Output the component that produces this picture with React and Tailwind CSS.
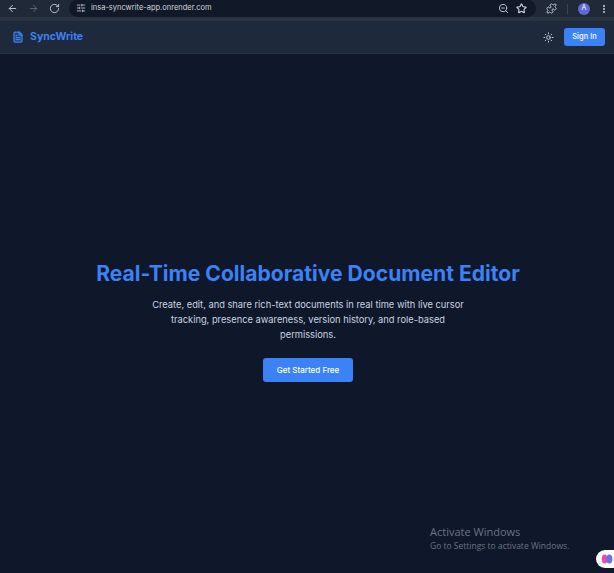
import React from 'react'
import { ArrowLeft, ArrowRight, RotateCw, SlidersHorizontal, ZoomOut, Star, Puzzle, MoreVertical, FileText, Sun } from 'lucide-react'

function BrowserBar() {
  return (
    <div className="h-[17px] flex items-center bg-[#1f2937] text-[#c7cdd6] overflow-hidden">
      <div className="flex items-center gap-[10px] pl-[7px] w-[69px] shrink-0">
        <ArrowLeft size={11} />
        <ArrowRight size={11} className="text-[#5f6875]" />
        <RotateCw size={11} />
      </div>
      <div className="w-[467px] h-[17px] -mt-[1px] flex items-center justify-between rounded-r-full rounded-l-full bg-[#111827] pl-[7px] pr-[9px]">
        <div className="flex items-center gap-[5px]">
          <SlidersHorizontal size={10} />
          <span className="text-[7.5px] text-[#d3d7dd]">insa-syncwrite-app.onrender.com</span>
        </div>
        <div className="flex items-center gap-[7px]">
          <ZoomOut size={11} />
          <Star size={11} strokeWidth={2.5} />
        </div>
      </div>
      <div className="flex items-center pl-[10px]">
        <Puzzle size={11} />
        <div className="w-px h-[10px] bg-[#3a4452] ml-[10px]" />
        <div className="w-[12px] h-[12px] ml-[10px] rounded-full bg-[#5f6bd0] flex items-center justify-center text-[7px] text-white">A</div>
        <MoreVertical size={10} strokeWidth={3} className="ml-[9px]" />
      </div>
    </div>
  )
}

export default function App() {
  return (
    <div className="relative w-[614px] h-[573px] overflow-hidden flex flex-col bg-[#0f172a] font-['Inter',sans-serif]">
      <BrowserBar />
      <div className="h-[4px] bg-[#2a3340]" />

      <nav className="h-[33px] flex items-center justify-between pl-[12px] pr-[9px] bg-[#1e293b] border-b border-[#263245]">
        <div className="flex items-center gap-[6px]">
          <FileText size={12} strokeWidth={2.5} className="text-[#3b82f6] fill-[#3b82f6]/25" />
          <span className="text-[10.5px] font-bold text-[#3b82f6]">SyncWrite</span>
        </div>
        <div className="flex items-center gap-[10px]">
          <Sun size={11} className="text-[#cbd5e1]" />
          <button className="w-[41px] h-[18px] rounded-[3px] bg-[#3b82f6] text-white text-[7.5px] font-medium">Sign In</button>
        </div>
      </nav>

      <main className="flex-1 flex flex-col items-center pt-[206px] pl-[2px]">
        <h1 className="text-[21.1px] leading-[28px] font-bold text-[#3b82f6]">Real-Time Collaborative Document Editor</h1>
        <p className="w-[320px] mt-[9px] text-center text-[9.3px] leading-[15px] text-[#cbd5e1]">
          Create, edit, and share rich-text documents in real time with live cursor tracking, presence awareness, version history, and role-based permissions.
        </p>
        <button className="w-[90px] h-[24px] mt-[16px] rounded-[3px] bg-[#3b82f6] text-white text-[8px] font-medium">Get Started Free</button>
      </main>

      <div className="absolute left-[430px] top-[525px] text-[#6b7483] font-['Open_Sans',sans-serif]">
        <div className="text-[11px] leading-[14px]">Activate Windows</div>
        <div className="text-[8.5px] leading-[13px]">Go to Settings to activate Windows.</div>
      </div>

      <div className="absolute right-0 top-[550px] w-[18px] h-[18px] rounded-l-full bg-white flex items-center pl-[5px]">
        <svg width="12" height="12" viewBox="0 0 12 12">
          <ellipse cx="3.6" cy="6" rx="3" ry="4.5" fill="#e0559f" />
          <ellipse cx="8.4" cy="6" rx="3" ry="4.5" fill="#6a6fe8" />
        </svg>
      </div>
    </div>
  )
}
